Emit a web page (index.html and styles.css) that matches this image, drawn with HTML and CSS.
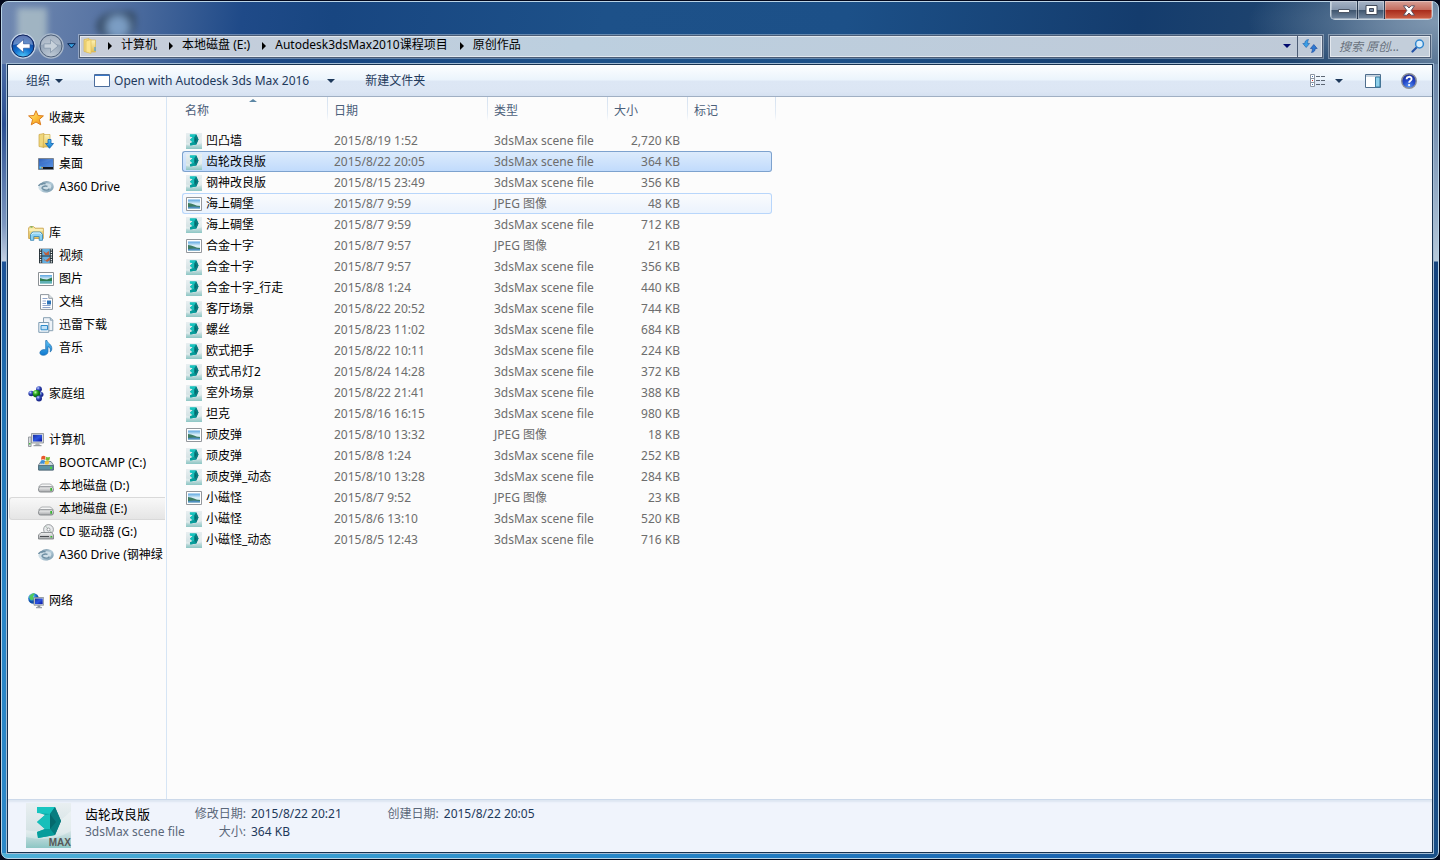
FILE: index.html
```html
<!DOCTYPE html>
<html lang="zh-CN">
<head>
<meta charset="utf-8">
<meta name="viewport" content="width=device-width, initial-scale=1">
<title>原创作品</title>
<link rel="stylesheet" href="styles.css">
</head>
<body>
<svg class="sprite" aria-hidden="true">
  <defs>
    <linearGradient id="g-gold" x1="0" y1="0" x2="0" y2="1"><stop offset="0" stop-color="#fdf3b4"/><stop offset="1" stop-color="#e2bf55"/></linearGradient>
    <linearGradient id="g-star" x1="0" y1="0" x2="1" y2="1"><stop offset="0" stop-color="#fff09a"/><stop offset=".5" stop-color="#fdc13a"/><stop offset="1" stop-color="#f08a1c"/></linearGradient>
    <linearGradient id="g-blue" x1="0" y1="0" x2="0" y2="1"><stop offset="0" stop-color="#5ec2f5"/><stop offset="1" stop-color="#0f79cf"/></linearGradient>
    <linearGradient id="g-screen" x1="0" y1="0" x2="1" y2="1"><stop offset="0" stop-color="#1b2f9e"/><stop offset=".5" stop-color="#2c55e0"/><stop offset="1" stop-color="#0a14a0"/></linearGradient>
    <linearGradient id="g-desk" x1="0" y1="0" x2="1" y2="1"><stop offset="0" stop-color="#2a5cb8"/><stop offset="1" stop-color="#7fb5f5"/></linearGradient>
    <linearGradient id="g-metal" x1="0" y1="0" x2="0" y2="1"><stop offset="0" stop-color="#f6f6f6"/><stop offset="1" stop-color="#a4a6a9"/></linearGradient>
    <linearGradient id="g-teal" x1="0" y1="0" x2="1" y2="0"><stop offset="0" stop-color="#12bdb8"/><stop offset="1" stop-color="#04787a"/></linearGradient>
    <linearGradient id="g-max" x1="0" y1="0" x2="0" y2="1"><stop offset="0" stop-color="#e9eff1"/><stop offset=".65" stop-color="#d3e2e4"/><stop offset="1" stop-color="#8cc6c4"/></linearGradient>
    <linearGradient id="g-sky" x1="0" y1="0" x2="0" y2="1"><stop offset="0" stop-color="#5aa5e0"/><stop offset=".5" stop-color="#e3f4fa"/><stop offset="1" stop-color="#8cc0c8"/></linearGradient>
    <linearGradient id="g-ring" x1="0" y1="0" x2="1" y2="1"><stop offset="0" stop-color="#7593a6"/><stop offset=".5" stop-color="#b4ccd9"/><stop offset="1" stop-color="#7d9bae"/></linearGradient>
    <radialGradient id="g-globe" cx=".35" cy=".3"><stop offset="0" stop-color="#b8edff"/><stop offset=".6" stop-color="#2a8be0"/><stop offset="1" stop-color="#0e4fa8"/></radialGradient>
    <radialGradient id="g-ball" cx=".35" cy=".3"><stop offset="0" stop-color="#cdd8ff"/><stop offset=".5" stop-color="#4b62cf"/><stop offset="1" stop-color="#1d2b90"/></radialGradient>
    <radialGradient id="g-green" cx=".35" cy=".3"><stop offset="0" stop-color="#c9ffb0"/><stop offset=".5" stop-color="#38b32a"/><stop offset="1" stop-color="#0f6f12"/></radialGradient>
    <radialGradient id="g-back" cx=".5" cy="1" r=".9"><stop offset="0" stop-color="#59d6ff"/><stop offset=".45" stop-color="#1272d0"/><stop offset="1" stop-color="#0b318c"/></radialGradient>
    <radialGradient id="g-fwd" cx=".5" cy="1" r="1"><stop offset="0" stop-color="#c3ced9"/><stop offset="1" stop-color="#7b8ea6"/></radialGradient>
    <radialGradient id="g-help" cx=".5" cy=".9" r=".9"><stop offset="0" stop-color="#5a96f4"/><stop offset=".5" stop-color="#2347c8"/><stop offset="1" stop-color="#1a2a94"/></radialGradient>
  </defs>

  <symbol id="i-star" viewBox="0 0 16 16"><path d="M8 .7l2.100 4.800 5.300.4-4 3.500 1.300 5.400L8 12l-4.700 2.800 1.300-5.400-4-3.500 5.300-.4z" fill="url(#g-star)" stroke="#dc7d1d"/></symbol>

  <symbol id="i-folder" viewBox="0 0 16 16"><path d="M2 1.500L7 .5v14l-5-1z" fill="#f0d77b" stroke="#d8b653" stroke-width=".7"/><path d="M7 2h6.500v12H7z" fill="url(#g-gold)" stroke="#d8b653" stroke-width=".7"/><path d="M4 3l5-1.500v14L4 14z" fill="#fbe48f" stroke="#dfc05d" stroke-width=".7"/><path d="M12.400 9h1.200v4h-1.200z" fill="#4aa0df"/></symbol>

  <symbol id="i-down" viewBox="0 0 16 16"><path d="M1 1.500L6 .5v14l-5-1z" fill="#f0d77b" stroke="#c9a445" stroke-width=".7"/><path d="M6 1.500h6V14H5z" fill="url(#g-gold)" stroke="#cfac4c" stroke-width=".7"/><path d="M10 6.500h3v4h2.500L11.500 15.300 7.500 10.500H10z" fill="url(#g-blue)" stroke="#0c5fae" stroke-width=".8"/></symbol>

  <symbol id="i-desk" viewBox="0 0 16 16"><path d="M.5 2.500h15v11H.5z" fill="url(#g-desk)" stroke="#7c8590"/><path d="M1 8q7-1 14-5v8H1z" fill="#2c69cb" opacity=".4"/><path d="M5 11h10v2H5z" fill="#14171d"/><path d="M1 11h4v2H1z" fill="#2b6cc0"/><path d="M1.500 10.500h2v2h-2z" fill="#63d1ee"/><path d="M3.500 11h1.300v1.500H3.500z" fill="#ffb13b"/></symbol>

  <symbol id="i-drive360" viewBox="0 0 16 16"><ellipse cx="8" cy="8.500" rx="7.600" ry="4.800" fill="#d0dfe7"/><path d="M3 5.500C7 1.500 14.500 3 14.500 7.500c0 4-7 6.500-10.500 3.500" fill="none" stroke="url(#g-ring)" stroke-width="2.400"/><path d="M.5 7c1-2 4.500-2.500 7-2.200M11 9.500c0 2-4.500 2.200-6.500.3-1.500-1.600 1.500-3.500 5-2.500" fill="none" stroke="#6e8fa3" stroke-width="1.400"/></symbol>

  <symbol id="i-lib" viewBox="0 0 16 16"><path d="M.7 13.500V3l1-1.300h4L7 3.200h8.300v10.300z" fill="url(#g-gold)" stroke="#c9a24a" stroke-width=".9"/><path d="M2.500 2h2" stroke="#3da34b"/><path d="M1 5h14" stroke="#fff7c9"/><path d="M2.500 15.300V9.500l2-2.500h8l2 2.500v5.800h-3.300V11.500H5.800v3.800z" fill="#8bd2f3" stroke="#4189b4" stroke-width=".9"/><path d="M3.500 9.500l1.500-1.500h7l1.500 1.500" fill="none" stroke="#e1f7ff"/></symbol>

  <symbol id="i-video" viewBox="0 0 16 16"><path d="M1 .7h14v14.600H1z" fill="#273339"/><path d="M4.200 1h7.600v6.500H4.200zM4.200 8.500h7.600V15H4.200z" fill="#62aee0"/><path d="M5 3l3 2 3-2v4H7zM5 10l2 3 5-4v3l-3 2z" fill="#bd603d"/><path d="M2.600 1.300v13.500M13.400 1.300v13.500" stroke="#f0f3f4" stroke-width="1.300" stroke-dasharray="1.300 1.100"/></symbol>

  <symbol id="i-pic" viewBox="0 0 16 16"><path d="M.5 1.500h15v13H.5z" fill="#fff" stroke="#8b9094"/><path d="M2 4h12v8.500H2z" fill="url(#g-sky)"/><path d="M2 7l3 1 4 .5 5-2V10H2z" fill="#2e7d52"/><path d="M2 10h12v2.500H2z" fill="#5fb0b5"/></symbol>

  <symbol id="i-doc" viewBox="0 0 16 16"><path d="M2.500.6h8.300l3.700 3.700v11.100h-12z" fill="#fff" stroke="#8f989f"/><path d="M10.800.6v3.700h3.700" fill="#dfe6ec" stroke="#8f989f"/><path d="M4.500 4.500h5M4.500 7h3.500M4.500 9.500h3.500M4.500 11.500h8M4.500 13.500h8" stroke="#8ea4ca"/><path d="M9 6.500h4v4H9z" fill="#2b72b7"/></symbol>

  <symbol id="i-xl" viewBox="0 0 16 16"><path d="M5.500.7h6.800l2.500 2.500v10.500H5.500z" fill="#eef3f8" stroke="#88a0b2"/><path d="M12.300.7v2.500h2.500" fill="none" stroke="#88a0b2"/><path d="M.8 5.500h10v9.800H.8z" fill="#f3f8fc" stroke="#7e9cb2"/><path d="M3 8.500h6.500v4.300H3z" fill="#bfe1f7" stroke="#2d8ac9"/></symbol>

  <symbol id="i-music" viewBox="0 0 16 16"><path d="M9 .5c.4 3 5 3.500 4.800 8.500-.1 1.300-.8 2.500-1.600 3 .8-3-.7-5-2.200-5.500v5.300C9.800 14 7.700 15.300 5.300 15.300c-2.300 0-3.600-1.300-3.400-2.800.2-1.700 2.300-3 4.600-2.900l1.200.2V.5z" fill="url(#g-blue)" stroke="#1b6cae" stroke-width=".7"/></symbol>

  <symbol id="i-home" viewBox="0 0 16 16"><circle cx="3.200" cy="7.500" r="2.800" fill="url(#g-ball)"/><circle cx="11" cy="3.200" r="2.900" fill="url(#g-ball)"/><circle cx="13" cy="8.500" r="2.500" fill="url(#g-ball)"/><circle cx="8.500" cy="7.800" r="3.800" fill="url(#g-green)"/><circle cx="11" cy="12.500" r="3" fill="url(#g-ball)"/></symbol>

  <symbol id="i-pc" viewBox="0 0 16 16"><path d="M.5 5h2.600v9.500H.5z" fill="#d9dde0" stroke="#858b91" stroke-width=".8"/><path d="M1 11h1.500v1.500H1z" fill="#48be43"/><path d="M3.500 1.500h12v9.500h-12z" fill="#d5d8dc" stroke="#858b91" stroke-width=".8"/><path d="M5 2.800h9v6.700H5z" fill="url(#g-screen)"/><path d="M8 11.200h3l1 2h-5z" fill="#aeb3b8"/><path d="M5.500 13.700h8" stroke="#848a90"/></symbol>

  <symbol id="i-hdd" viewBox="0 0 16 16"><path d="M4 6h8q1.500 0 3.300 3H.7Q2.500 6 4 6z" fill="#f5f5f5" stroke="#a0a2a5" stroke-width=".8"/><rect x=".6" y="8.800" width="14.800" height="5.200" rx="1.800" fill="url(#g-metal)" stroke="#7f8387" stroke-width=".9"/><path d="M12.300 10h1.700v2.800h-1.700z" fill="#37b62f"/></symbol>

  <symbol id="i-boot" viewBox="0 0 16 16"><path d="M3 6.500h10l2.500 3.500v5H.5v-5z" fill="#cfd9df" stroke="#5f7280" stroke-width=".8"/><path d="M.7 10.500h14.600V15H.7z" fill="#5b91a6" stroke="#476674" stroke-width=".8"/><path d="M12 11.700h2v2.200h-2z" fill="#49d33e"/><path d="M3.500 1.500q2.300-1.500 4 0L7 4.800q-2-1-4 0z" fill="#e9582a"/><path d="M8.100 1.700q2 1.300 4 0l-.7 3.500q-2 1-3.900-.1z" fill="#77bd37"/><path d="M2.900 5.500q2-1 3.900 0L6.300 9q-2-1-4 0z" fill="#3a90db"/><path d="M7.400 5.800q2 1 3.900 0L10.600 9q-2 1.200-3.800 0z" fill="#f8c436"/></symbol>

  <symbol id="i-cd" viewBox="0 0 16 16"><circle cx="10.500" cy="5.500" r="4.900" fill="#e8eaec" stroke="#85898d" stroke-width=".8"/><path d="M10.500 5.500L7.500 2M10.500 5.500l3.500 3" stroke="#a9bfae"/><circle cx="10.500" cy="5.500" r="1.500" fill="#fff" stroke="#85898d" stroke-width=".8"/><path d="M3 8.500h10.500l2 2.500v4H.5v-4z" fill="url(#g-metal)" stroke="#777b7f" stroke-width=".8"/><path d="M2 12.500h9" stroke="#494c50"/><path d="M12.500 12h1.700v1.500h-1.700z" fill="#37b62f"/></symbol>

  <symbol id="i-net" viewBox="0 0 16 16"><circle cx="5.500" cy="5.500" r="5.300" fill="url(#g-globe)"/><path d="M2 2.500q3-3 5-2L5 3.500l1 2-2 2Q0 5.500 2 2.500z" fill="#4fc95b"/><path d="M6 4.500h9.700v7.700H6z" fill="#d2d7dc" stroke="#848a91" stroke-width=".8"/><path d="M7 5.500h7.700v5.600H7z" fill="url(#g-screen)"/><path d="M9.500 12.300h2.800v1.700H9.500z" fill="#8e949b"/><path d="M8 14.700h6" stroke="#848a91"/></symbol>

  <symbol id="i-max" viewBox="0 0 45 45"><path d="M0 0h45v45H0z" fill="url(#g-max)"/><path d="M0 27Q20 33 45 8v20Q25 40 0 34z" fill="#fff" opacity=".3"/><path d="M11 4h18l6 14-6 14-17 3-1-6 8-3-8-7 8-7-8-3z" fill="url(#g-teal)"/><path d="M11 4h18l-5 7-13-1z" fill="#17c5c0"/><path d="M19 12l5-1v15l-5 0-8-7z" fill="#17bfba"/><path d="M24 11l5-7 6 14-6 14-5-6z" fill="#077d80"/><path d="M19 26h5l5 6-17 3-1-6z" fill="#079d9b"/><path d="M24 11l6 8-6 7z" fill="#04696d"/></symbol>

  <symbol id="i-jpg" viewBox="0 0 16 16"><path d="M.5 1.500h15v13H.5z" fill="#fff" stroke="#93979c"/><path d="M2 3.500h12v9H2z" fill="url(#g-sky)"/><path d="M2 7q3 0 6 1.500t6 1.500v1H2z" fill="#3d7c62"/><path d="M2 11q6-1 12 0v1.500H2z" fill="#4f8fc0"/></symbol>
</svg>

<div class="desktop">
<div class="window">
  <header class="caption">
    <div class="window-buttons">
      <button class="wb" aria-label="最小化"><svg width="14" height="8"><path d="M1.500 3.500h11v3h-11z" fill="#fff" stroke="#4d5666"/></svg></button>
      <button class="wb" aria-label="最大化"><svg width="13" height="10"><path d="M1 .5h11v9H1z" fill="#fff" stroke="#434b5b"/><path d="M4.500 3.500h4v3h-4z" fill="#7386a3" stroke="#434b5b"/></svg></button>
      <button class="wb wb-close" aria-label="关闭"><svg width="14" height="11" viewBox="0 0 14 11"><path d="M1.500.8h3.300L7 3 9.200.8h3.300L9.200 5.500l3.300 4.700H9.200L7 8l-2.200 2.200H1.500l3.300-4.700z" fill="#fff" stroke="#4f4a5b" stroke-width=".9"/></svg></button>
    </div>
    <div class="navbar">
      <div class="history">
        <button class="round" aria-label="后退"><svg width="26" height="26" viewBox="0 0 26 26"><circle cx="13" cy="13" r="12" fill="url(#g-back)" stroke="#c3d2e4" stroke-width="1.500"/><circle cx="13" cy="13" r="11" fill="none" stroke="#14275c"/><path d="M3 12a10 9.500 0 0 1 20 0q-10-3-20 0z" fill="#fff" opacity=".35"/><path d="M13.500 6.500L6 13l7.500 6.500v-4.300H20v-4.400h-6.500z" fill="#fff" stroke="#24468f" stroke-width=".6"/></svg></button>
        <button class="round" aria-label="前进"><svg width="26" height="26" viewBox="0 0 26 26"><circle cx="13" cy="13" r="12" fill="url(#g-fwd)" stroke="#a9b8cb" stroke-width="1.500"/><circle cx="13" cy="13" r="11" fill="none" stroke="#4f6079"/><path d="M3 12a10 9.500 0 0 1 20 0q-10-3-20 0z" fill="#fff" opacity=".3"/><path d="M12.500 6.500L20 13l-7.500 6.500v-4.300H6v-4.400h6.500z" fill="#c7d1db" stroke="#8495a9" stroke-width=".8"/></svg></button>
        <button class="recent" aria-label="最近的位置"><svg width="9" height="6"><path d="M.7.700h7.600L4.500 5z" fill="#37a0e0" stroke="#0b2450"/></svg></button>
      </div>
      <nav class="address" aria-label="地址">
        <svg class="icon" aria-hidden="true"><use href="#i-folder"/></svg>
        <span class="crumb-arrow"></span><a href="#">计算机</a>
        <span class="crumb-arrow"></span><a href="#">本地磁盘 (E:)</a>
        <span class="crumb-arrow"></span><a href="#">Autodesk3dsMax2010课程项目</a>
        <span class="crumb-arrow"></span><a href="#">原创作品</a>
        <button class="address-drop" aria-label="以前的位置"><span class="tri"></span></button>
        <button class="refresh" aria-label="刷新"><svg width="16" height="14" viewBox="0 0 16 14"><path d="M6.500.5C3.500 1 2.800 2.500 2.800 4.500H.8l3.400 4 3.400-4H5.600c0-1.700.2-3 .9-4z" fill="#3b9fe5" stroke="#1c5fae" stroke-width=".6"/><path d="M9.500 13.500c3-.5 3.700-2 3.700-4h2l-3.400-4-3.400 4h2c0 1.700-.2 3-.9 4z" fill="#2f7ad2" stroke="#17479c" stroke-width=".6"/></svg></button>
      </nav>
      <form class="search">
        <input type="search" aria-label="搜索 原创作品" placeholder="搜索 原创...">
        <svg width="14" height="14" viewBox="0 0 14 14" aria-hidden="true"><path d="M6 8L1.500 12.500" stroke="#2553a5" stroke-width="2.200" stroke-linecap="round"/><circle cx="8.500" cy="5" r="3.900" fill="#d8ecfa" stroke="#2f86cf" stroke-width="1.500"/></svg>
      </form>
    </div>
  </header>

  <div class="client">
    <div class="toolbar">
      <button class="tool">组织 <span class="tri"></span></button>
      <button class="tool tool-open"><svg width="16" height="13" aria-hidden="true"><path d="M.5.500h15v12H.5z" fill="#fff" stroke="#4c6d9c"/><path d="M1 1.500h14" stroke="#3a78c8"/></svg>Open with Autodesk 3ds Max 2016 <span class="tri"></span></button>
      <button class="tool tool-new">新建文件夹</button>
      <div class="tool-right">
        <button class="tool tool-view" aria-label="更改视图"><svg width="16" height="13"><path d="M.5.500h4v12h-4zM.5 4.500h4M.5 8.500h4" fill="#fff" stroke="#8c96a3"/><path d="M2 2.500h1M2 10.500h1" stroke="#3c73ba"/><path d="M2 6.500h1" stroke="#c5302c"/><path d="M6 2.500h4M11 2.500h4M6 6.500h4M11 6.500h4M6 10.500h4M11 10.500h4" stroke="#5c6673"/></svg><span class="tri"></span></button>
        <button class="tool" aria-label="显示预览窗格"><svg width="16" height="14"><path d="M.5.500h15v13H.5z" fill="#fff" stroke="#4f6e8d"/><path d="M1 2h14" stroke="#8fa9c1"/><path d="M10.500 3h4.500v10h-4.500z" fill="#8fd0ea" stroke="#3a7ca0"/></svg></button>
        <button class="tool" aria-label="获取帮助"><svg width="16" height="16" viewBox="0 0 16 16"><circle cx="8" cy="8" r="7.300" fill="url(#g-help)" stroke="#8b8f98" stroke-width="1.400"/><path d="M5.600 6.200C5.600 3 10.600 3 10.600 6c0 1.800-2.500 1.800-2.500 3.800" fill="none" stroke="#fff" stroke-width="1.800"/><circle cx="8.100" cy="12" r="1.100" fill="#fff"/></svg></button>
      </div>
    </div>

    <div class="panes">
      <nav class="sidebar" aria-label="导航窗格">
        <ul>
          <li class="root"><a href="#"><svg class="icon"><use href="#i-star"/></svg>收藏夹</a></li>
          <li><a href="#"><svg class="icon"><use href="#i-down"/></svg>下载</a></li>
          <li><a href="#"><svg class="icon"><use href="#i-desk"/></svg>桌面</a></li>
          <li><a href="#"><svg class="icon"><use href="#i-drive360"/></svg>A360 Drive</a></li>
        </ul>
        <ul>
          <li class="root"><a href="#"><svg class="icon"><use href="#i-lib"/></svg>库</a></li>
          <li><a href="#"><svg class="icon"><use href="#i-video"/></svg>视频</a></li>
          <li><a href="#"><svg class="icon"><use href="#i-pic"/></svg>图片</a></li>
          <li><a href="#"><svg class="icon"><use href="#i-doc"/></svg>文档</a></li>
          <li><a href="#"><svg class="icon"><use href="#i-xl"/></svg>迅雷下载</a></li>
          <li><a href="#"><svg class="icon"><use href="#i-music"/></svg>音乐</a></li>
        </ul>
        <ul>
          <li class="root"><a href="#"><svg class="icon"><use href="#i-home"/></svg>家庭组</a></li>
        </ul>
        <ul>
          <li class="root"><a href="#"><svg class="icon"><use href="#i-pc"/></svg>计算机</a></li>
          <li><a href="#"><svg class="icon"><use href="#i-boot"/></svg>BOOTCAMP (C:)</a></li>
          <li><a href="#"><svg class="icon"><use href="#i-hdd"/></svg>本地磁盘 (D:)</a></li>
          <li class="current"><a href="#"><svg class="icon"><use href="#i-hdd"/></svg>本地磁盘 (E:)</a></li>
          <li><a href="#"><svg class="icon"><use href="#i-cd"/></svg>CD 驱动器 (G:)</a></li>
          <li><a href="#"><svg class="icon"><use href="#i-drive360"/></svg>A360 Drive (钢神绿</a></li>
        </ul>
        <ul>
          <li class="root"><a href="#"><svg class="icon"><use href="#i-net"/></svg>网络</a></li>
        </ul>
      </nav>

      <main class="files">
        <table>
          <colgroup><col class="c-name"><col class="c-date"><col class="c-type"><col class="c-size"><col class="c-tag"></colgroup>
          <thead>
            <tr><th scope="col" class="sorted">名称</th><th scope="col">日期</th><th scope="col">类型</th><th scope="col">大小</th><th scope="col">标记</th></tr>
          </thead>
          <tbody>
            <tr><td><svg class="icon"><use href="#i-max"/></svg>凹凸墙</td><td>2015/8/19 1:52</td><td>3dsMax scene file</td><td>2,720 KB</td><td></td></tr>
            <tr class="selected"><td><svg class="icon"><use href="#i-max"/></svg>齿轮改良版</td><td>2015/8/22 20:05</td><td>3dsMax scene file</td><td>364 KB</td><td></td></tr>
            <tr><td><svg class="icon"><use href="#i-max"/></svg>钢神改良版</td><td>2015/8/15 23:49</td><td>3dsMax scene file</td><td>356 KB</td><td></td></tr>
            <tr class="hot"><td><svg class="icon"><use href="#i-jpg"/></svg>海上碉堡</td><td>2015/8/7 9:59</td><td>JPEG 图像</td><td>48 KB</td><td></td></tr>
            <tr><td><svg class="icon"><use href="#i-max"/></svg>海上碉堡</td><td>2015/8/7 9:59</td><td>3dsMax scene file</td><td>712 KB</td><td></td></tr>
            <tr><td><svg class="icon"><use href="#i-jpg"/></svg>合金十字</td><td>2015/8/7 9:57</td><td>JPEG 图像</td><td>21 KB</td><td></td></tr>
            <tr><td><svg class="icon"><use href="#i-max"/></svg>合金十字</td><td>2015/8/7 9:57</td><td>3dsMax scene file</td><td>356 KB</td><td></td></tr>
            <tr><td><svg class="icon"><use href="#i-max"/></svg>合金十字_行走</td><td>2015/8/8 1:24</td><td>3dsMax scene file</td><td>440 KB</td><td></td></tr>
            <tr><td><svg class="icon"><use href="#i-max"/></svg>客厅场景</td><td>2015/8/22 20:52</td><td>3dsMax scene file</td><td>744 KB</td><td></td></tr>
            <tr><td><svg class="icon"><use href="#i-max"/></svg>螺丝</td><td>2015/8/23 11:02</td><td>3dsMax scene file</td><td>684 KB</td><td></td></tr>
            <tr><td><svg class="icon"><use href="#i-max"/></svg>欧式把手</td><td>2015/8/22 10:11</td><td>3dsMax scene file</td><td>224 KB</td><td></td></tr>
            <tr><td><svg class="icon"><use href="#i-max"/></svg>欧式吊灯2</td><td>2015/8/24 14:28</td><td>3dsMax scene file</td><td>372 KB</td><td></td></tr>
            <tr><td><svg class="icon"><use href="#i-max"/></svg>室外场景</td><td>2015/8/22 21:41</td><td>3dsMax scene file</td><td>388 KB</td><td></td></tr>
            <tr><td><svg class="icon"><use href="#i-max"/></svg>坦克</td><td>2015/8/16 16:15</td><td>3dsMax scene file</td><td>980 KB</td><td></td></tr>
            <tr><td><svg class="icon"><use href="#i-jpg"/></svg>顽皮弹</td><td>2015/8/10 13:32</td><td>JPEG 图像</td><td>18 KB</td><td></td></tr>
            <tr><td><svg class="icon"><use href="#i-max"/></svg>顽皮弹</td><td>2015/8/8 1:24</td><td>3dsMax scene file</td><td>252 KB</td><td></td></tr>
            <tr><td><svg class="icon"><use href="#i-max"/></svg>顽皮弹_动态</td><td>2015/8/10 13:28</td><td>3dsMax scene file</td><td>284 KB</td><td></td></tr>
            <tr><td><svg class="icon"><use href="#i-jpg"/></svg>小磁怪</td><td>2015/8/7 9:52</td><td>JPEG 图像</td><td>23 KB</td><td></td></tr>
            <tr><td><svg class="icon"><use href="#i-max"/></svg>小磁怪</td><td>2015/8/6 13:10</td><td>3dsMax scene file</td><td>520 KB</td><td></td></tr>
            <tr><td><svg class="icon"><use href="#i-max"/></svg>小磁怪_动态</td><td>2015/8/5 12:43</td><td>3dsMax scene file</td><td>716 KB</td><td></td></tr>
          </tbody>
        </table>
      </main>
    </div>

    <footer class="details">
      <div class="thumb"><svg width="45" height="45" aria-hidden="true"><use href="#i-max"/></svg><span>MAX</span></div>
      <div class="file-title"><strong>齿轮改良版</strong><span>3dsMax scene file</span></div>
      <dl><dt>修改日期:</dt><dd>2015/8/22 20:21</dd><dt>大小:</dt><dd>364 KB</dd></dl>
      <dl><dt>创建日期:</dt><dd>2015/8/22 20:05</dd></dl>
    </footer>
  </div>
</div>
</div>
</body>
</html>
```

FILE: styles.css
```css
* { box-sizing: border-box; }

body {
  margin: 0;
  font: 12px/18px "Noto Sans", "Noto Sans CJK SC", sans-serif;
  color: #000;
}

button, input { font: inherit; color: inherit; }
button { padding: 0; border: 0; background: none; display: inline-flex; align-items: center; justify-content: center; }
a { color: inherit; text-decoration: none; }
ul, dl, dd { margin: 0; padding: 0; list-style: none; }
svg { display: block; flex: none; }

.sprite { position: absolute; width: 0; height: 0; }
.icon { width: 16px; height: 16px; }

.tri {
  border: 4px solid transparent;
  border-top-color: #1e395b;
  border-bottom: 0;
}

/* window frame */
.desktop { display: flex; min-height: 100vh; padding: 1px; background: #03081c; }

.window {
  position: relative;
  flex: 1;
  min-width: 0;
  display: flex;
  flex-direction: column;
  padding: 0 4px 4px;
  border: 1px solid #b9d3e6;
  border-radius: 7px;
  background:
    linear-gradient(90deg, #4fb0d8, #3a9fd2 20%, #2585c8 45%, #1b64b0 75%, #194f88) bottom / 100% 5px no-repeat,
    linear-gradient(#4a6ba5, #2a4f93 60px, #7c97c0 160px, #c3cfe2 197px, #1d5297 198px, #2073b5 340px, #2a86c8 540px, #2c88c8) left 62px / 6px 100% no-repeat,
    linear-gradient(#6b86a8, #7791b2 60px, #b5c8da 197px, #15447f 198px, #194f88) right 62px / 6px 100% no-repeat,
    radial-gradient(ellipse 190px 60px at 100% 20px, #7f97b0, #6d87a500 100%),
    linear-gradient(97deg, #7189b1, #5572a2 110px, #1f4a88 240px, #184681 330px, #1d5189 600px, #1c5088 840px, #143c6d 1130px, #23476f 1330px, #7088a5);
}

.caption { padding: 32px 0 5px; }
.caption::before,
.caption::after {
  content: "";
  position: absolute;
  filter: blur(3px);
}
.caption::before { left: 15px; top: 6px; width: 30px; height: 40px; background: #b3c5ca; opacity: .75; }
.caption::after { left: 94px; top: 9px; width: 40px; height: 28px; border-radius: 60% 20% 50% 50%; background: radial-gradient(circle at 22px 16px, #86a9cd 8px, #33485f 17px); opacity: .8; }

.window-buttons {
  position: absolute;
  top: -1px;
  right: 5px;
  display: flex;
  border: 1px solid #c4d2df;
  border-top: 0;
  border-radius: 0 0 5px 5px;
  overflow: hidden;
}
.wb {
  width: 27px;
  height: 18px;
  border-right: 1px solid #27384f;
  background: linear-gradient(#a7b4c6, #8595ac 50%, #40566f 52%, #7287a0);
  box-shadow: inset 0 0 0 1px #ffffff55;
}
.wb-close { width: 47px; border: 0; background: linear-gradient(#d8a198, #c56d5f 48%, #a92c1c 52%, #cc6147); }

.navbar { position: relative; z-index: 1; display: flex; align-items: center; height: 24px; padding: 0 3px 0 4px; }
.history { display: flex; align-items: center; width: 69px; }
.round { margin-right: 2px; }
.recent { margin-left: 1px; }

.address, .search {
  display: flex;
  align-items: center;
  height: 23px;
  border: 1px solid #4b5c75;
  box-shadow: inset 0 0 0 1px #ffffff88, 0 0 0 1px #ffffff55;
}
.address { flex: 1; min-width: 0; padding-left: 2px; background: linear-gradient(90deg, #c7cdd9, #bccfdf 40%, #bfcad8); white-space: nowrap; }
.address a { line-height: 16px; padding-bottom: 2px; }
.crumb-arrow {
  margin: 0 9px 0 12px;
  border: 4px solid transparent;
  border-left-color: #000;
  border-right: 0;
}
.address .icon + .crumb-arrow { margin-left: 10px; }
.address-drop { width: 20px; height: 21px; margin-left: auto; }
.address-drop .tri { border-top-color: #000a6e; }
.refresh { width: 25px; height: 21px; border-left: 1px solid #4b5c75; }

.search { width: 102px; margin-left: 6px; padding: 0 5px 0 9px; background: #c3ceda; }
.search input { flex: 1; min-width: 0; height: 20px; padding: 0; border: 0; outline: 0; background: none; font-style: italic; }
.search input::placeholder { color: #69727e; opacity: 1; }

/* client area */
.client {
  flex: 1;
  display: flex;
  flex-direction: column;
  min-width: 0;
  border: 1px solid #17314f;
  outline: 1px solid #a3bcd4;
  margin: 1px;
  background: #fcfcfc;
}

.toolbar {
  display: flex;
  align-items: center;
  height: 32px;
  padding: 0 15px 0 18px;
  border-bottom: 1px solid #a0afc3;
  background: linear-gradient(#fdfeff, #ebf4fc 48%, #dde7f5 52%, #dce6f4 85%, #d5e1f1);
  color: #1e395b;
  white-space: nowrap;
}
.tool { gap: 5px; }
.tool-open { margin-left: 31px; gap: 4px; }
.tool-open .tri { margin-left: 14px; }
.tool-new { margin-left: 30px; }
.tool-right { display: flex; align-items: center; gap: 20px; margin-left: auto; }
.tool-view { gap: 9px; margin-right: 2px; }

.panes { flex: 1; display: flex; min-height: 0; }

.sidebar { flex: none; width: 159px; padding: 9px 1px 0; border-right: 1px solid #d6e5f5; }
.sidebar ul { margin-bottom: 23px; }
.sidebar a {
  display: flex;
  align-items: center;
  gap: 5px;
  height: 23px;
  padding-left: 28px;
  border: 1px solid transparent;
  border-right: 0;
  overflow: hidden;
  white-space: nowrap;
}
.sidebar .root a { padding-left: 18px; }
.sidebar .current a { border-color: #d9d9d9; border-radius: 3px 0 0 3px; background: linear-gradient(#f8f8f8, #e5e5e5); }

.files { flex: 1; min-width: 0; padding-left: 15px; }
.files table { width: 590px; table-layout: fixed; border-spacing: 0; white-space: nowrap; }
.c-name { width: 146px; }
.c-date { width: 160px; }
.c-type { width: 120px; }
.c-size { width: 80px; }
.c-tag { width: 84px; }

.files th {
  position: relative;
  height: 33px;
  padding: 5px 6px 10px;
  font-weight: normal;
  text-align: left;
  color: #4c607a;
}
.files th:first-child { padding-left: 3px; }
.files th::after {
  content: "";
  position: absolute;
  top: 0;
  right: 0;
  width: 1px;
  height: 24px;
  background: linear-gradient(#d5e1f0, #e4ecf5 70%, #fcfcfc);
}
.files th:last-child::after { right: -4px; }
.sorted::before {
  content: "";
  position: absolute;
  top: 2px;
  left: 67px;
  border: 4px solid transparent;
  border-top: 0;
  border-bottom: 3px solid #5c87a5;
}

.files td { height: 21px; padding: 0 5px; border: 1px solid transparent; border-width: 1px 0; line-height: 19px; color: #6d6d6d; }
.files td:first-child { display: flex; align-items: center; gap: 4px; padding-left: 3px; border-left-width: 1px; color: #000; }
.files td:nth-child(2), .files td:nth-child(3) { padding-left: 6px; }
.files td:nth-child(4) { padding-right: 8px; text-align: right; }
.files td:last-child { border-right-width: 1px; }
.files .selected td { background: linear-gradient(#dcebfc, #c1dbfc); border-color: #7da2ce; }
.files .hot td { background: linear-gradient(#fafbfd, #ebf3fd); border-color: #b8d6fb; }
.selected td:first-child, .hot td:first-child { border-radius: 3px 0 0 3px; }
.selected td:last-child, .hot td:last-child { border-radius: 0 3px 3px 0; }

/* details pane */
.details {
  display: flex;
  min-height: 53px;
  padding: 3px 18px 0;
  border-top: 1px solid #ccd9ea;
  box-shadow: inset 0 2px 2px #dde6f2;
  background: #f0f4fc;
  color: #5a6779;
  white-space: nowrap;
}
.thumb { position: relative; width: 45px; height: 45px; margin-right: 14px; }
.thumb span { position: absolute; right: 0; bottom: 0; font: bold 10px/10px "Liberation Sans", sans-serif; color: #585858; }
.file-title { display: flex; flex-direction: column; width: 104px; padding-top: 2px; }
.file-title strong { font-size: 13px; font-weight: normal; color: #000; }
.details dl { display: grid; grid-template-columns: 57px auto; grid-auto-rows: 18px; align-content: start; column-gap: 5px; padding-top: 2px; margin-right: 40px; }
.details dt { text-align: right; }
.details dd { color: #1e395b; }
```
